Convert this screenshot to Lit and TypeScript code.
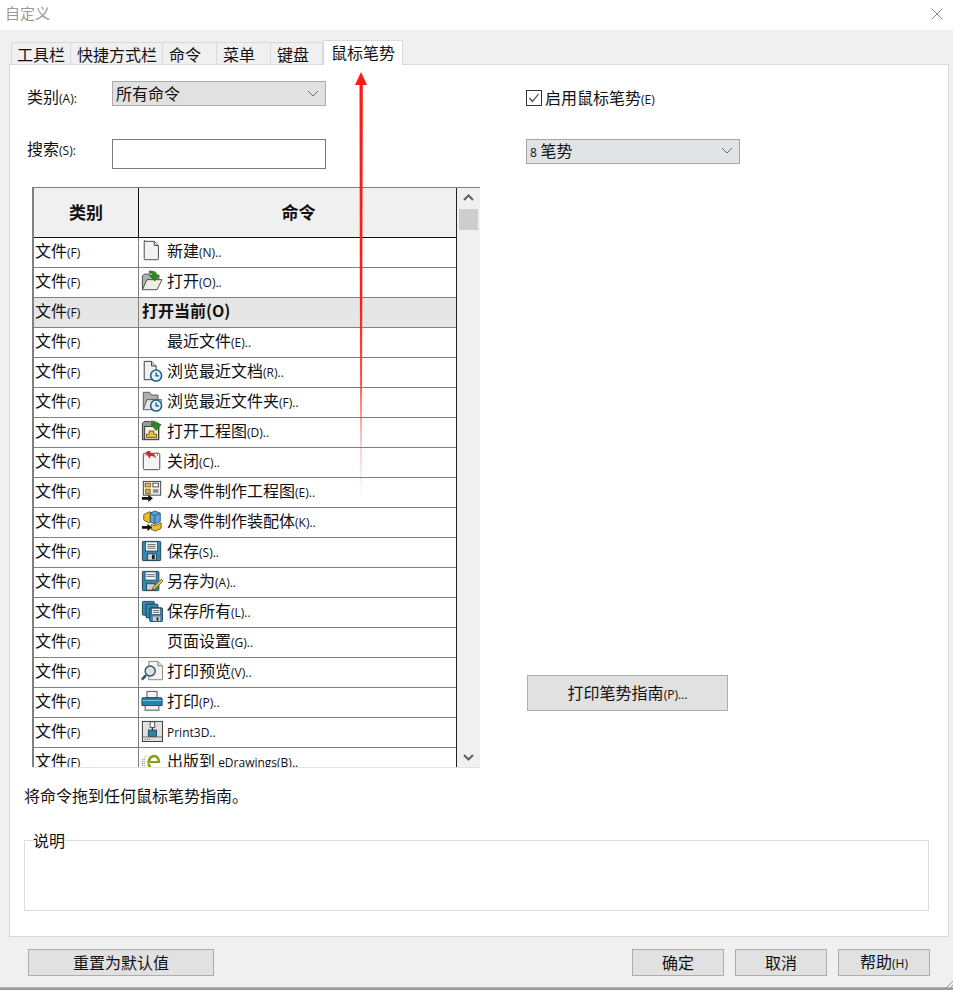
import { LitElement, html, css, svg } from "lit";
import { customElement } from "lit/decorators.js";

const icons: Record<string, any> = {
  doc: svg`<path d="M4.500 1.500h10l4.500 4.500v14.500a1 1 0 0 1-1 1h-13.500a1 1 0 0 1-1-1v-19a1 1 0 0 1 1-1z" fill="#f2f2f2" stroke="#3f3f3f"/><path d="M14.500 1.500v4.500h4.500" fill="#d8d8d8" stroke="#3f3f3f"/>`,
  open: svg`<path d="M1.500 21.500v-15l2-2h5l2 2h9v4" fill="#b0b0b0" stroke="#444"/><path d="M1.500 21.500l5-11h16.500l-5.500 11z" fill="#efefdf" stroke="#444"/><path d="M9 1l5 .5c2 .5 3 2 3 4h3l-5 6.500-6-6.500h3.500c0-1.500-1-2-3.500-2z" fill="#2b8f1f" stroke="#175a10" stroke-width=".7"/>`,
  recentDoc: svg`<path d="M3.500 1.500h8l5 5v15h-13z" fill="#f0f0f0" stroke="#333"/><path d="M11.500 1.500v5h5" fill="#d5d5d5" stroke="#333"/><circle cx="16.500" cy="17" r="6" fill="#e4f0f7" stroke="#17628a" stroke-width="1.700"/><path d="M16.500 13.500v3.800h3" fill="none" stroke="#0f4564" stroke-width="1.300"/>`,
  recentFolder: svg`<path d="M2.500 21.500v-19h7l2 3h7v6" fill="#adadad" stroke="#555"/><path d="M2.500 21.500l4-11h16l-3 11z" fill="#e6e6e6" stroke="#555"/><circle cx="16.500" cy="17" r="6" fill="#e4f0f7" stroke="#17628a" stroke-width="1.700"/><path d="M16.500 13.500v3.800h3" fill="none" stroke="#0f4564" stroke-width="1.300"/>`,
  openDrawing: svg`<path d="M1.500 3.500l2-2h6l2 2h8v18h-18z" fill="#9a9a9a" stroke="#333"/><rect x="4" y="7" width="15" height="14" fill="#f1efe3" stroke="#333"/><path d="M6 19v-3.500h3v-3.500h5v3.500h3v3.500z" fill="#eabf3c" stroke="#5f4a10" stroke-width=".9"/><path d="M11 1l4 .5c2 .5 3 1.500 3 3.500h4l-5.500 6.500-5.500-6.500h3.500c0-1.500-1-2-3.500-2.500z" fill="#2b8f1f" stroke="#175a10" stroke-width=".7"/>`,
  close: svg`<rect x="2.500" y="3.500" width="18" height="18" rx="1.500" fill="#f5f5f5" stroke="#3f3f3f"/><path d="M7 1h3.500l-.7 2.500c3.500-.8 6 1.500 6.500 6-1.500-2.500-3.500-3.200-6-3l-.4 3-5-6z" fill="#c9302a"/><path d="M5 4.500v2M18 4.500v2" stroke="#888"/>`,
  partDrawing: svg`<rect x="2.500" y="1.500" width="19" height="15" fill="#efefe6" stroke="#333"/><rect x="4.500" y="3.500" width="6" height="4" fill="#eabf3c" stroke="#5f4a10" stroke-width=".8"/><rect x="13" y="3.500" width="6" height="4" fill="#fff" stroke="#333" stroke-width=".9"/><rect x="13" y="10" width="6" height="4" fill="#8f8f8f"/><path d="M5 10h5v5h-5z" fill="#d9b02f" stroke="#5f4a10" stroke-width=".8"/><path d="M1 18.500h7v-2.500l5 4-5 4v-2.500h-7z" fill="#111"/>`,
  partAsm: svg`<path d="M9 2l6 2v7l-6 3-6-3v-6z" fill="#efbf20" stroke="#5c4a10" stroke-width=".9"/><path d="M15 1l6 2.500v9l-6 3-5-3v-9z" fill="#62a3d6" stroke="#1a466b" stroke-width=".9"/><path d="M10 3.500l5 2.500 6-2.500M15 6v9.500" fill="none" stroke="#1a466b" stroke-width=".8"/><path d="M11 16l5 1 6-3v6l-6 3-5-2z" fill="#efbf20" stroke="#5c4a10" stroke-width=".9"/><path d="M1 17.500h6v-2.500l5 4-5 4v-2.500h-6z" fill="#111"/>`,
  save: svg`<path d="M2.500 1.500h18a1 1 0 0 1 1 1v19a1 1 0 0 1-1 1h-18a1 1 0 0 1-1-1v-19a1 1 0 0 1 1-1z" fill="#3a87ae" stroke="#123f58"/><rect x="5" y="2" width="13" height="10" fill="#f2f2f2" stroke="#123f58" stroke-width=".8"/><path d="M7 5h9M7 7h9M7 9h9" stroke="#666"/><rect x="7" y="15" width="10" height="7" fill="#cfcfcf" stroke="#123f58" stroke-width=".9"/><rect x="12" y="16" width="3" height="5" fill="#222"/>`,
  saveAs: svg`<path d="M2.500 1.500h16a1 1 0 0 1 1 1v19a1 1 0 0 1-1 1h-16a1 1 0 0 1-1-1v-19a1 1 0 0 1 1-1z" fill="#3a87ae" stroke="#123f58"/><rect x="4.500" y="2" width="12" height="9" fill="#f2f2f2" stroke="#123f58" stroke-width=".8"/><path d="M6 5h9M6 7h9" stroke="#666"/><rect x="6" y="15" width="9" height="7" fill="#cfcfcf" stroke="#123f58" stroke-width=".9"/><path d="M22 10l2 2-9 9-3 1 1-3z" fill="#eabf3c" stroke="#5f4a10" stroke-width=".8"/><path d="M14 21l-2 1 1-3z" fill="#c9302a"/>`,
  saveAll: svg`<rect x="1.500" y="1.500" width="13" height="15" rx="1" fill="#3a87ae" stroke="#123f58"/><rect x="5.500" y="4.500" width="13" height="15" rx="1" fill="#3a87ae" stroke="#123f58"/><rect x="9.500" y="8.500" width="14" height="15" rx="1" fill="#3a87ae" stroke="#123f58"/><rect x="11.500" y="9" width="10" height="7" fill="#f2f2f2" stroke="#123f58" stroke-width=".7"/><path d="M13 11.500h7M13 13.500h7" stroke="#666"/><rect x="13" y="18" width="8" height="5" fill="#cfcfcf"/><rect x="17" y="19" width="2" height="3.500" fill="#222"/>`,
  preview: svg`<path d="M8.500 1.500h10l5 5v15h-15z" fill="#f2f2f2" stroke="#808080"/><path d="M18.500 1.500v5h5" fill="#d8d8d8" stroke="#808080"/><circle cx="10" cy="12" r="5.500" fill="#d5e3ec" stroke="#4a4a4a" stroke-width="1.500"/><path d="M5.500 16.500l-4.500 5" stroke="#17628a" stroke-width="2.800"/>`,
  print: svg`<path d="M6.500 1.500h11v7h-11z" fill="#f2f2f2" stroke="#444"/><path d="M2 8.500h20a1 1 0 0 1 1 1v7.500h-22v-7.500a1 1 0 0 1 1-1z" fill="#2a82ab" stroke="#123f58"/><path d="M1.500 11.500h21" stroke="#8fc6de"/><rect x="4.500" y="17" width="15" height="5" fill="#f2f2f2" stroke="#444"/>`,
  print3d: svg`<rect x="1.500" y="1.500" width="22" height="22" fill="#dfdfdf" stroke="#333"/><rect x="10" y="2" width="5" height="6" fill="#fff" stroke="#333" stroke-width=".9"/><path d="M12.500 8v3" stroke="#333" stroke-width="1.500"/><rect x="8" y="11" width="9" height="7" fill="#2a82ab" stroke="#123f58" stroke-width=".9"/><path d="M2 18.500h21" stroke="#666"/><path d="M4 21h1M6.500 21h1M9 21h1" stroke="#444"/>`,
  edraw: svg`<path d="M1.500 9v8M3.500 7v12M5.500 5v2M5.500 19v2" stroke="#666" stroke-dasharray="1 1"/><path d="M8 13.200h13c.2-5.400-2.600-9-6.700-9-4.300 0-7.300 3.900-7.300 8.800 0 5.200 3 8.800 7.900 8.800 2.200 0 4-.6 5.400-1.600l-1-2.300c-1.200.8-2.600 1.200-4.100 1.200-3 0-4.700-1.700-5.100-4.700z M10.200 11c.4-2.400 1.900-4 4.100-4 2.300 0 3.600 1.700 3.700 4z" fill="#86a024" fill-rule="evenodd"/>`,
};

interface Row { icon?: string; main: string; suffix: string; bold?: boolean }

const rows: Row[] = [
  { icon: "doc", main: "新建", suffix: "(N).." },
  { icon: "open", main: "打开", suffix: "(O).." },
  { main: "打开当前(O)", suffix: "", bold: true },
  { main: "最近文件", suffix: "(E).." },
  { icon: "recentDoc", main: "浏览最近文档", suffix: "(R).." },
  { icon: "recentFolder", main: "浏览最近文件夹", suffix: "(F).." },
  { icon: "openDrawing", main: "打开工程图", suffix: "(D).." },
  { icon: "close", main: "关闭", suffix: "(C).." },
  { icon: "partDrawing", main: "从零件制作工程图", suffix: "(E).." },
  { icon: "partAsm", main: "从零件制作装配体", suffix: "(K).." },
  { icon: "save", main: "保存", suffix: "(S).." },
  { icon: "saveAs", main: "另存为", suffix: "(A).." },
  { icon: "saveAll", main: "保存所有", suffix: "(L).." },
  { main: "页面设置", suffix: "(G).." },
  { icon: "preview", main: "打印预览", suffix: "(V).." },
  { icon: "print", main: "打印", suffix: "(P).." },
  { icon: "print3d", main: "", suffix: "Print3D.." },
  { icon: "edraw", main: "出版到", suffix: " eDrawings(B).." },
];

const tabs = ["工具栏", "快捷方式栏", "命令", "菜单", "键盘"];
const tabWidths = [60, 92, 54, 54, 52];

const chevron = svg`<path d="M1 1l5 5 5-5" fill="none" stroke="#6a6a6a" stroke-width="1"/>`;

@customElement("app-root")
export class AppRoot extends LitElement {
  static styles = css`
    :host {
      display: block;
      position: relative;
      width: 953px;
      height: 990px;
      overflow: hidden;
      background: #f0f0f0;
      font-family: "Noto Sans CJK SC", "Noto Sans", sans-serif;
      font-size: 16px;
      color: #111;
    }
    * { box-sizing: border-box; }
    .small { font-family: "Open Sans", "Noto Sans CJK SC", sans-serif; font-size: 12px; }
    .titlebar {
      height: 30px;
      background: #fff;
      display: flex;
      align-items: center;
      justify-content: space-between;
      padding: 0 10px 2px 5px;
      font-size: 15px;
      color: #9a9a9a;
    }
    .titlebar span { padding-bottom: 3px; line-height: 1; }
    .titlebar svg { display: block; width: 12px; height: 12px; }
    .tabs {
      display: flex;
      align-items: flex-end;
      height: 34px;
      padding: 0 0 0 11px;
    }
    .tab {
      height: 22px;
      background: #f0f0f0;
      border: 1px solid #d9d9d9;
      border-bottom: none;
      border-left-width: 0;
      display: flex;
      align-items: center;
      line-height: 1;
      padding: 0 0 0 6px;
      flex: none;
    }
    .tab:first-child { border-left-width: 1px; padding-left: 5px; }
    .tab.active {
      width: 80px;
      height: 25px;
      background: #fff;
      border-left-width: 1px;
      margin-bottom: -1px;
      position: relative;
      z-index: 1;
      padding: 0 0 3px 7px;
    }
    .panel {
      margin-left: 9px;
      width: 940px;
      height: 873px;
      background: #fff;
      border: 1px solid #d9d9d9;
      display: flex;
      flex-direction: column;
    }
    .top { display: flex; }
    .left { width: 470px; flex: none; padding-left: 17px; }
    .right { flex: 1; padding-left: 46px; }
    .form-row { display: flex; align-items: center; }
    .form-row .label { width: 85px; line-height: 1; }
    .cat-row { height: 25px; margin-top: 16px; }
    .cat-row .label { padding-top: 6px; }
    .search-row { height: 30px; margin-top: 33px; }
    .search-row .label { padding-bottom: 11px; }
    .select {
      width: 214px;
      background: #e1e1e1;
      border: 1px solid #adadad;
      display: flex;
      align-items: center;
      justify-content: space-between;
      padding: 0 6px 0 3px;
      line-height: 1;
    }
    .select svg { width: 12px; height: 7px; display: block; }
    .cat-select { height: 25px; padding-bottom: 1px; }
    .search {
      width: 214px;
      height: 30px;
      border: 1px solid #7a7a7a;
      background: #fff;
    }
    .table {
      margin: 18px 0 0 5px;
      width: 448px;
      height: 581px;
      display: flex;
      border-top: 1px solid #808080;
      border-bottom: 1px solid #e3e3e3;
      overflow: hidden;
    }
    .grid {
      width: 425px;
      flex: none;
      border-left: 2px solid #808080;
      border-right: 1px solid #222;
      height: 579px;
      overflow: hidden;
    }
    .head {
      display: grid;
      grid-template-columns: 105px 1fr;
      height: 50px;
      background: #f0f0f0;
      border-bottom: 1px solid #111;
      font-weight: 700;
      font-size: 17px;
    }
    .head div { display: flex; align-items: center; justify-content: center; padding-bottom: 3px; line-height: 1; }
    .head div:first-child { border-right: 1px solid #111; }
    .head div:last-child { padding-left: 2px; }
    .row {
      display: grid;
      grid-template-columns: 105px 1fr;
      height: 30px;
      border-bottom: 1px solid #808080;
    }
    .row.hl { background: #e6e6e6; }
    .row:last-child { border-bottom: none; }
    .c1 {
      border-right: 1px solid #808080;
      padding: 0 0 5px 1px;
      display: flex;
      align-items: center;
      line-height: 1;
    }
    .c2 {
      display: flex;
      align-items: center;
      padding: 0 0 3px 2px;
      line-height: 1;
      white-space: nowrap;
    }
    .c2 .cmd { padding-bottom: 2px; }
    .ico { width: 22px; height: 22px; flex: none; margin-right: 4px; display: block; }
    .noicon { width: 22px; margin-right: 4px; flex: none; }
    .bold { font-weight: 700; font-size: 16px; padding: 0 0 2px 1px; }
    .scroll {
      flex: 1;
      background: #f0f0f0;
      display: flex;
      flex-direction: column;
      align-items: center;
    }
    .scroll svg { width: 11px; height: 7px; flex: none; display: block; }
    .sb-up { margin-top: 6px; }
    .thumb { width: 19px; height: 21px; background: #cdcdcd; margin-top: 8px; }
    .sb-down { margin-top: auto; margin-bottom: 6px; }
    .enable { display: flex; align-items: center; margin-top: 25px; line-height: 1; height: 16px; }
    .enable-text { padding-bottom: 2px; }
    .check {
      width: 16px;
      height: 16px;
      border: 1px solid #333;
      margin-right: 3px;
      flex: none;
    }
    .check svg { display: block; width: 14px; height: 14px; }
    .ges-select {
      margin-top: 33px;
      height: 25px;
      background: #e1e3e5;
      border-color: #a3a7ac;
      padding-bottom: 2px;
    }
    .print-btn { width: 201px; height: 36px; margin: 511px 0 0 1px; padding-bottom: 2px; }
    .btn {
      background: #e1e1e1;
      border: 1px solid #adadad;
      display: flex;
      align-items: center;
      justify-content: center;
      line-height: 1;
      flex: none;
    }
    .hint { margin: 17px 0 0 14px; line-height: 20px; }
    fieldset {
      margin: 25px 0 0 14px;
      width: 905px;
      height: 81px;
      padding: 0 0 0 8px;
      border: 1px solid #dcdcdc;
    }
    legend { padding: 0; line-height: 20px; font-size: 16px; background: #fff; }
    .footer { display: flex; padding: 12px 0 0 28px; }
    .footer .btn { height: 27px; width: 92px; padding-bottom: 2px; }
    .footer .reset { width: 186px; margin-right: 418px; }
    .footer .btn + .btn { margin-left: 11px; }
    .footer .reset + .btn { margin-left: 0; }
    .bottomline {
      position: absolute;
      left: 0;
      right: 0;
      bottom: 0;
      height: 3px;
      background: #9b9b9b;
      border-top: 1px solid #b5b5b5;
    }
    .grip { position: absolute; right: 0; bottom: 0; width: 10px; height: 10px; display: block; }
    .arrow { position: absolute; left: 350px; top: 70px; width: 24px; height: 430px; pointer-events: none; z-index: 5; }
  `;

  private select(text: any, cls: string) {
    return html`<div class="select ${cls}"><span>${text}</span><svg viewBox="0 0 12 7">${chevron}</svg></div>`;
  }

  render() {
    return html`
      <div class="titlebar">
        <span>自定义</span>
        <svg viewBox="0 0 12 12"><path d="M.5.5l11 11M11.500.5l-11 11" stroke="#8a8a8a" fill="none"/></svg>
      </div>
      <div class="tabs">
        ${tabs.map((t, i) => html`<div class="tab" style="width:${tabWidths[i]}px">${t}</div>`)}
        <div class="tab active">鼠标笔势</div>
      </div>
      <div class="panel">
        <div class="top">
          <div class="left">
            <div class="form-row cat-row">
              <div class="label">类别<span class="small">(A):</span></div>
              ${this.select("所有命令", "cat-select")}
            </div>
            <div class="form-row search-row">
              <div class="label">搜索<span class="small">(S):</span></div>
              <div class="search"></div>
            </div>
            <div class="table">
              <div class="grid">
                <div class="head"><div>类别</div><div>命令</div></div>
                ${rows.map(
                  (r) => html`<div class="row ${r.bold ? "hl" : ""}">
                    <div class="c1"><span>文件<span class="small">(F)</span></span></div>
                    <div class="c2">
                      ${r.bold
                        ? html`<span class="bold">${r.main}</span>`
                        : html`${r.icon
                              ? html`<svg class="ico" viewBox="0 0 24 24">${icons[r.icon]}</svg>`
                              : html`<span class="noicon"></span>`}
                            <span class="cmd">${r.main}<span class="small">${r.suffix}</span></span>`}
                    </div>
                  </div>`
                )}
              </div>
              <div class="scroll">
                <svg class="sb-up" viewBox="0 0 11 7"><path d="M1 6l4.500-4.500L10 6" fill="none" stroke="#606060" stroke-width="2"/></svg>
                <div class="thumb"></div>
                <svg class="sb-down" viewBox="0 0 11 7"><path d="M1 1l4.500 4.500L10 1" fill="none" stroke="#606060" stroke-width="2"/></svg>
              </div>
            </div>
          </div>
          <div class="right">
            <div class="enable">
              <div class="check"><svg viewBox="0 0 14 14"><path d="M2.500 7l3 3.500 6-7.500" fill="none" stroke="#444" stroke-width="1.200"/></svg></div>
              <span class="enable-text">启用鼠标笔势<span class="small">(E)</span></span>
            </div>
            ${this.select(html`<span class="small">8</span> 笔势`, "ges-select")}
            <div class="btn print-btn"><span>打印笔势指南<span class="small">(P)...</span></span></div>
          </div>
        </div>
        <div class="hint">将命令拖到任何鼠标笔势指南。</div>
        <fieldset><legend>说明</legend></fieldset>
      </div>
      <div class="footer">
        <div class="btn reset">重置为默认值</div>
        <div class="btn">确定</div>
        <div class="btn">取消</div>
        <div class="btn"><span>帮助<span class="small">(H)</span></span></div>
      </div>
      <div class="bottomline"></div>
      <svg class="grip" viewBox="0 0 10 10"><path d="M10 1L1 10M10 5l-5 5" stroke="#9a9a9a" fill="none"/></svg>
      <svg class="arrow" viewBox="0 0 24 430">
        <defs>
          <linearGradient id="fade" x1="0" y1="0" x2="0" y2="1">
            <stop offset="0" stop-color="#ff1a10"/>
            <stop offset=".55" stop-color="#ff2015"/>
            <stop offset=".72" stop-color="#ff2a20" stop-opacity=".8"/>
            <stop offset=".86" stop-color="#ff2a20" stop-opacity=".3"/>
            <stop offset="1" stop-color="#ff2a20" stop-opacity="0"/>
          </linearGradient>
        </defs>
        <path d="M11 2L5 15h4.500L10.200 428h1.600L12.800 15H17z" fill="url(#fade)"/>
      </svg>
    `;
  }
}
